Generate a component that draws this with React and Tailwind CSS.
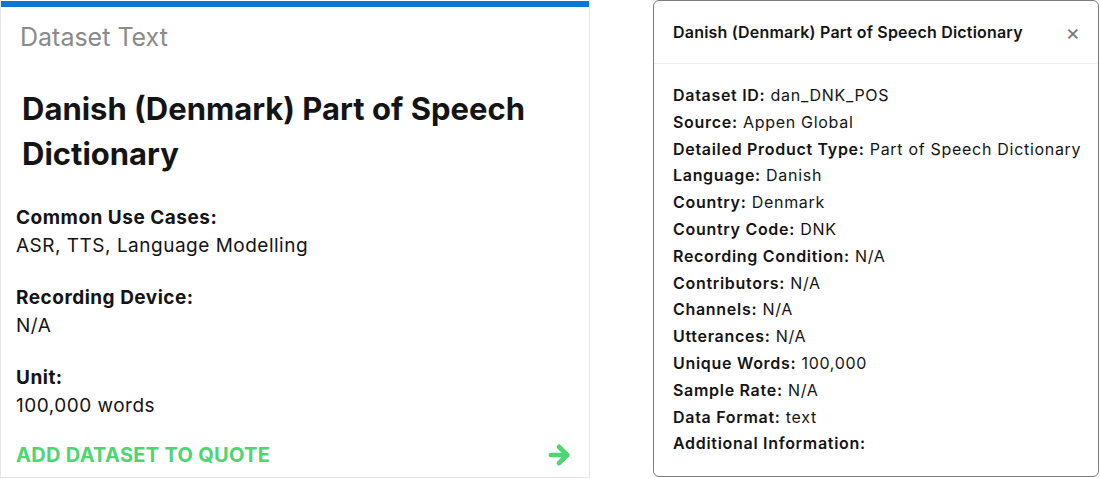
import { ArrowRight } from 'lucide-react'

const details = [
  ['Dataset ID', 'dan_DNK_POS'],
  ['Source', 'Appen Global'],
  ['Detailed Product Type', 'Part of Speech Dictionary'],
  ['Language', 'Danish'],
  ['Country', 'Denmark'],
  ['Country Code', 'DNK'],
  ['Recording Condition', 'N/A'],
  ['Contributors', 'N/A'],
  ['Channels', 'N/A'],
  ['Utterances', 'N/A'],
  ['Unique Words', '100,000'],
  ['Sample Rate', 'N/A'],
  ['Data Format', 'text'],
  ['Additional Information', ''],
]

function DatasetCard() {
  return (
    <div className="w-[590px] h-[478px] flex flex-col border-x border-b border-[#e6e6e6]">
      <div className="mt-px h-[6px] bg-[#0b77d4]" />
      <div className="flex flex-col flex-1 px-[15px]">
        <p className="mt-[15px] ml-[4px] text-[25px] leading-[30px] text-[#8a8a8a]">Dataset Text</p>
        <h2 className="mt-[34px] ml-[6px] text-[31px] leading-[45px] font-bold text-[#141414]">
          Danish (Denmark) Part of Speech Dictionary
        </h2>
        <div className="mt-[28px] text-[19px] leading-[28px] tracking-[0.5px] text-[#141414]">
          <p className="font-bold">Common Use Cases:</p>
          <p>ASR, TTS, Language Modelling</p>
          <p className="font-bold mt-[24px]">Recording Device:</p>
          <p>N/A</p>
          <p className="font-bold mt-[24px]">Unit:</p>
          <p>100,000 words</p>
        </div>
        <div className="mt-[20px] flex items-center justify-between pr-[1px]">
          <span className="text-[20px] font-bold uppercase text-[#4cd571] tracking-[0.3px]">Add dataset to quote</span>
          <ArrowRight className="w-[28px] h-[28px] text-[#4cd571]" strokeWidth={4} />
        </div>
      </div>
    </div>
  )
}

function DetailsModal() {
  return (
    <div className="w-[446px] h-[477px] border border-[#7c7c7c] rounded-[6px] bg-white flex flex-col">
      <div className="h-[63px] flex items-center justify-between pl-[19px] pr-[18px] border-b border-[#f0f0f0]">
        <h3 className="text-[16px] font-semibold tracking-[0.2px] text-[#141414]">Danish (Denmark) Part of Speech Dictionary</h3>
        <span className="text-[22px] leading-none text-[#777]">×</span>
      </div>
      <div className="px-[19px] pt-[18px] text-[16px] leading-[26.8px] tracking-[0.7px] text-[#141414]">
        {details.map(([label, value]) => (
          <p key={label} className="whitespace-nowrap">
            <span className="font-semibold">{label}:</span>
            {value ? ' ' + value : ''}
          </p>
        ))}
      </div>
    </div>
  )
}

export default function App() {
  return (
    <div className="w-[1100px] h-[478px] bg-white flex justify-between pr-[1px] font-['Inter',sans-serif]">
      <DatasetCard />
      <DetailsModal />
    </div>
  )
}
